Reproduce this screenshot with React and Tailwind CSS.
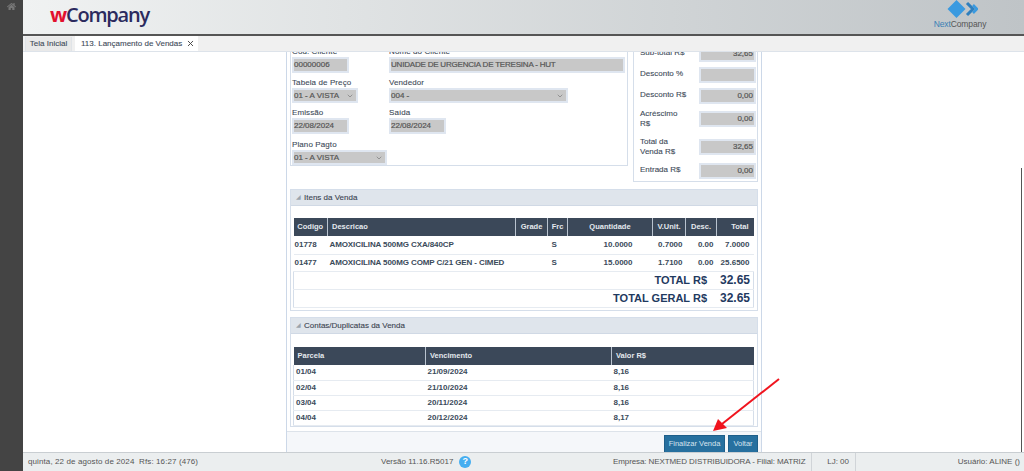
import React from "react";
import { FaHome } from "react-icons/fa";
import { ChevronDown, X } from "lucide-react";

const itens = [
  { cod: "01778", desc: "AMOXICILINA 500MG CXA/840CP", frc: "S", qtd: "10.0000", unit: "0.7000", dsc: "0.00", total: "7.0000", h: "h-[18px]" },
  { cod: "01477", desc: "AMOXICILINA 500MG COMP C/21 GEN - CIMED", frc: "S", qtd: "15.0000", unit: "1.7100", dsc: "0.00", total: "25.6500", h: "h-[17px]" },
];

const parcelas = [
  { p: "01/04", venc: "21/09/2024", valor: "8,16" },
  { p: "02/04", venc: "21/10/2024", valor: "8,16" },
  { p: "03/04", venc: "20/11/2024", valor: "8,16" },
  { p: "04/04", venc: "20/12/2024", valor: "8,17" },
];

function Campo({ label, valor, largura, select, altura = "h-[16px]", className = "", apertado }) {
  return (
    <div className={className}>
      <div className="h-[11px] text-[8px] tracking-[0.1px] leading-[11px] text-[#3d4a58] [-webkit-text-stroke:0.1px] whitespace-nowrap">{label}</div>
      <div className={`${largura} ${altura} bg-[#c8c8c8] border-2 border-[#dfe6f0] flex items-center justify-between pr-[2px] text-[8px] [-webkit-text-stroke:0.2px] text-[#555] ${apertado ? "tracking-[-0.2px]" : ""}`}>
        <span>{valor}</span>
        {select && <ChevronDown size={8} className="text-[#777]" />}
      </div>
    </div>
  );
}

function Total({ label, valor, className = "", duasLinhas }) {
  return (
    <div className={`flex justify-between ${duasLinhas ? "items-center h-[20px]" : "items-start"} ${className}`}>
      <div className={`text-[8px] leading-[10px] text-[#3d4a58] [-webkit-text-stroke:0.1px] ${duasLinhas ? "w-[45px]" : "pt-[2px] whitespace-nowrap"}`}>{label}</div>
      <div className="w-[57px] h-[16px] bg-[#c8c8c8] border-2 border-[#dfe6f0] flex items-center justify-end pr-[1px] text-[8px] [-webkit-text-stroke:0.2px] text-[#555]">{valor}</div>
    </div>
  );
}

function Painel({ titulo, className = "", children }) {
  return (
    <div className={`border border-[#d5deea] ${className}`}>
      <div className="h-[16px] bg-[#dfe5ec] border-b border-[#d0d9e5] flex items-center gap-[3px] pl-[5px] text-[8px] [-webkit-text-stroke:0.1px] text-[#39424e]">
        <span className="text-[6px] text-[#9aa3ad]">◢</span>
        {titulo}
      </div>
      {children}
    </div>
  );
}

export default function App() {
  return (
    <div className="relative h-[471px] w-[1024px] flex overflow-hidden bg-white font-['Liberation_Sans',Arial,sans-serif]">
      <div className="w-[23px] shrink-0 bg-[#444444] flex justify-center">
        <FaHome size={9} className="text-[#777] mt-[2px]" />
      </div>

      <div className="flex-1 min-w-0 flex flex-col">
        <header className="h-[36px] shrink-0 border-b-2 border-[#555] bg-gradient-to-r from-[#f0f2f2] to-[#bfc4c7] flex justify-between">
          <div className="pl-[27px] pt-[1px] text-[20px] leading-[28px] tracking-[-1.2px] font-['Open_Sans',sans-serif] font-semibold text-[#2b2a5e]">
            <span className="text-[#e2102e] font-bold">w</span>Company
          </div>
          <div className="w-[52px] mr-[38px] flex flex-col items-center">
            <svg width="36" height="19" viewBox="0 0 36 19" className="shrink-0">
              <polygon points="14.5,0 23.5,9 14.5,18 5.5,9" fill="#3a9ae0" />
              <polyline points="25,3 31,9 25,15" fill="none" stroke="#2f7fbd" strokeWidth="3" />
              <polyline points="31,5 35,9 31,13" fill="none" stroke="#3a9ae0" strokeWidth="2.5" />
            </svg>
            <div className="text-[8.5px] tracking-[-0.1px] leading-[10px] whitespace-nowrap text-[#555]">
              <span className="text-[#3a7fb5]">Next</span>Company
            </div>
          </div>
        </header>

        <nav className="h-[16px] shrink-0 bg-[#f0f0f0] border-b border-[#dde3ea] flex items-end pl-[2px] gap-[3px] text-[8px] whitespace-nowrap text-[#3d4a58] [-webkit-text-stroke:0.1px]">
          <div className="w-[47px] h-[14px] bg-[#e9e9e9] border-x border-[#e0e4e8] flex items-center justify-center">Tela Inicial</div>
          <div className="w-[123px] h-[15px] bg-white flex items-center justify-between pl-[6px] pr-[3px]">
            113. Lançamento de Vendas
            <X size={9} strokeWidth={2.5} className="text-[#444]" />
          </div>
        </nav>

        <main className="flex-1 min-h-0 overflow-hidden relative">
          <div className="ml-[263px] w-[476px] h-full border-x border-[#ccd8e8] flex flex-col">
            <div className="flex-1 min-h-0 px-[3px]">
              <div className="-mt-[12px] flex items-start gap-[5px]">
                <div className="w-[338px] h-[126px] border border-[#d5deea] pl-[1px] pt-[5px] flex flex-col">
                  <div className="flex gap-[40px]">
                    <Campo label="Cod. Cliente" valor="00000006" largura="w-[57px]" />
                    <Campo label="Nome do Cliente" valor="UNIDADE DE URGENCIA DE TERESINA - HUT" largura="w-[236px]" apertado />
                  </div>
                  <div className="flex gap-[31px] mt-[4px]">
                    <Campo label="Tabela de Preço" valor="01 - A VISTA" largura="w-[66px]" select altura="h-[15px]" />
                    <Campo label="Vendedor" valor="004 -" largura="w-[179px]" select altura="h-[15px]" />
                  </div>
                  <div className="flex gap-[40px] mt-[4px]">
                    <Campo label="Emissão" valor="22/08/2024" largura="w-[57px]" />
                    <Campo label="Saída" valor="22/08/2024" largura="w-[57px]" />
                  </div>
                  <Campo label="Plano Pagto" valor="01 - A VISTA" largura="w-[95px]" select altura="h-[15px]" className="mt-[5px]" />
                </div>

                <div className="w-[125px] h-[142px] border border-[#d5deea] pl-[6px] pr-[1px] pt-[5px]">
                  <Total label="Sub-total R$" valor="32,65" />
                  <Total label="Desconto %" valor="" className="mt-[5px]" />
                  <Total label="Desconto R$" valor="0,00" className="mt-[5px]" />
                  <Total label="Acréscimo R$" valor="0,00" duasLinhas className="mt-[5px]" />
                  <Total label="Total da Venda R$" valor="32,65" duasLinhas className="mt-[8px]" />
                  <Total label="Entrada R$" valor="0,00" className="mt-[6px]" />
                </div>
              </div>

              <Painel titulo="Itens da Venda" className="mt-[7px] h-[122px]">
                <div className="pl-[2px] pr-[4px] pt-[12px]">
                  <table className="w-[460px] table-fixed border-collapse text-[8px] font-bold text-[#3a4a5a]">
                    <colgroup>
                      <col className="w-[34px]" />
                      <col className="w-[188px]" />
                      <col className="w-[32px]" />
                      <col className="w-[20px]" />
                      <col className="w-[85px]" />
                      <col className="w-[33px]" />
                      <col className="w-[31px]" />
                      <col className="w-[37px]" />
                    </colgroup>
                    <thead>
                      <tr className="h-[18px] bg-[#3b4859] text-[#e4e8ee] text-[7.5px]">
                        <th className="border-r border-[#b9c3cf] text-center font-bold">Codigo</th>
                        <th className="border-r border-[#b9c3cf] text-left pl-[4px] font-bold">Descricao</th>
                        <th className="border-r border-[#b9c3cf] text-center font-bold">Grade</th>
                        <th className="border-r border-[#b9c3cf] text-center font-bold">Frc</th>
                        <th className="border-r border-[#b9c3cf] text-center font-bold">Quantidade</th>
                        <th className="border-r border-[#b9c3cf] text-center font-bold">V.Unit.</th>
                        <th className="border-r border-[#b9c3cf] text-center font-bold">Desc.</th>
                        <th className="text-right pr-[5px] font-bold">Total</th>
                      </tr>
                    </thead>
                    <tbody>
                      {itens.map((i) => (
                        <tr key={i.cod} className={`${i.h} border-b border-[#e6ebf1]`}>
                          <td className="pl-[1px]">{i.cod}</td>
                          <td className="pl-[2px] whitespace-nowrap tracking-[-0.1px]">{i.desc}</td>
                          <td></td>
                          <td className="pl-[4px]">{i.frc}</td>
                          <td className="text-right pr-[20px]">{i.qtd}</td>
                          <td className="text-right pr-[3px]">{i.unit}</td>
                          <td className="text-right pr-[3px]">{i.dsc}</td>
                          <td className="text-right pr-[4px]">{i.total}</td>
                        </tr>
                      ))}
                      <tr className="h-[18px] border-b border-[#e6ebf1] border-x border-x-[#d5deea] text-[11px] leading-none text-[#1f3a5f]">
                        <td colSpan={8} className="text-right pr-[3px] pb-[1px]">
                          TOTAL R$<span className="inline-block w-[43px] text-right text-[12px]">32.65</span>
                        </td>
                      </tr>
                      <tr className="h-[18px] border-b border-[#e6ebf1] border-x border-x-[#d5deea] text-[11px] leading-none text-[#1f3a5f]">
                        <td colSpan={8} className="text-right pr-[3px] pb-[1px]">
                          TOTAL GERAL R$<span className="inline-block w-[43px] text-right text-[12px]">32.65</span>
                        </td>
                      </tr>
                    </tbody>
                  </table>
                </div>
              </Painel>

              <Painel titulo="Contas/Duplicatas da Venda" className="mt-[6px] h-[110px]">
                <div className="pl-[2px] pr-[4px] pt-[13px]">
                  <table className="w-[460px] table-fixed border-collapse text-[8px] font-bold text-[#3a4a5a]">
                    <colgroup>
                      <col className="w-[132px]" />
                      <col className="w-[186px]" />
                      <col className="w-[142px]" />
                    </colgroup>
                    <thead>
                      <tr className="h-[18px] bg-[#3b4859] text-[#e4e8ee] text-[7.5px]">
                        <th className="border-r border-[#b9c3cf] text-left pl-[4px] font-bold">Parcela</th>
                        <th className="border-r border-[#b9c3cf] text-left pl-[4px] font-bold">Vencimento</th>
                        <th className="text-left pl-[4px] font-bold">Valor R$</th>
                      </tr>
                    </thead>
                    <tbody>
                      {parcelas.map((p) => (
                        <tr key={p.p} className="h-[15px] border-b border-[#e6ebf1] border-x border-x-[#d5deea]">
                          <td className="pl-[2px]">{p.p}</td>
                          <td className="pl-[2px]">{p.venc}</td>
                          <td className="pl-[2px]">{p.valor}</td>
                        </tr>
                      ))}
                    </tbody>
                  </table>
                </div>
              </Painel>
            </div>

            <div className="h-[21px] shrink-0 bg-[#f5f7fa] border-t border-[#dde3ea] flex justify-end items-start gap-[3px] pt-[3px] pr-[3px] text-[7.5px] text-[#d6e4ef]">
              <div className="w-[61px] h-[18px] bg-[#27709f] border border-[#1f5f8a] flex items-center justify-center">Finalizar Venda</div>
              <div className="w-[30px] h-[18px] bg-[#27709f] border border-[#1f5f8a] flex items-center justify-center">Voltar</div>
            </div>
          </div>
          <div className="absolute right-[2px] bottom-0 w-[1px] h-[284px] bg-[#555]"></div>
        </main>

        <footer className="h-[19px] shrink-0 bg-[#ebeeef] border-t border-[#c9ced2] flex items-center text-[8px] text-[#555] whitespace-nowrap">
          <div className="w-[350px] pl-[5px] whitespace-pre tracking-[0.1px]">quinta, 22 de agosto de 2024  Rfs: 16:27 (476)</div>
          <div className="w-[240px] pl-[8px] flex items-center gap-[6px]">
            Versão 11.16.R5017
            <span className="w-[12px] h-[12px] rounded-full bg-[#45aef0] text-white text-[9px] font-bold flex items-center justify-center">?</span>
          </div>
          <div className="w-[199px] h-full border-r border-[#d0d4d8] flex items-center tracking-[-0.1px]">Empresa: NEXTMED DISTRIBUIDORA - Filial: MATRIZ</div>
          <div className="w-[44px] h-full border-r border-[#d0d4d8] flex items-center justify-end pr-[6px]">LJ: 00</div>
          <div className="flex-1 pr-[4px] text-right">Usuário: ALINE ()</div>
        </footer>
      </div>

      <svg className="absolute left-[700px] top-[370px] pointer-events-none" width="90" height="70" viewBox="700 370 90 70">
        <line x1="779" y1="379" x2="722" y2="424" stroke="#f0141e" strokeWidth="2" />
        <polygon points="713,431 718,419 727,428" fill="#f0141e" />
      </svg>
    </div>
  );
}
